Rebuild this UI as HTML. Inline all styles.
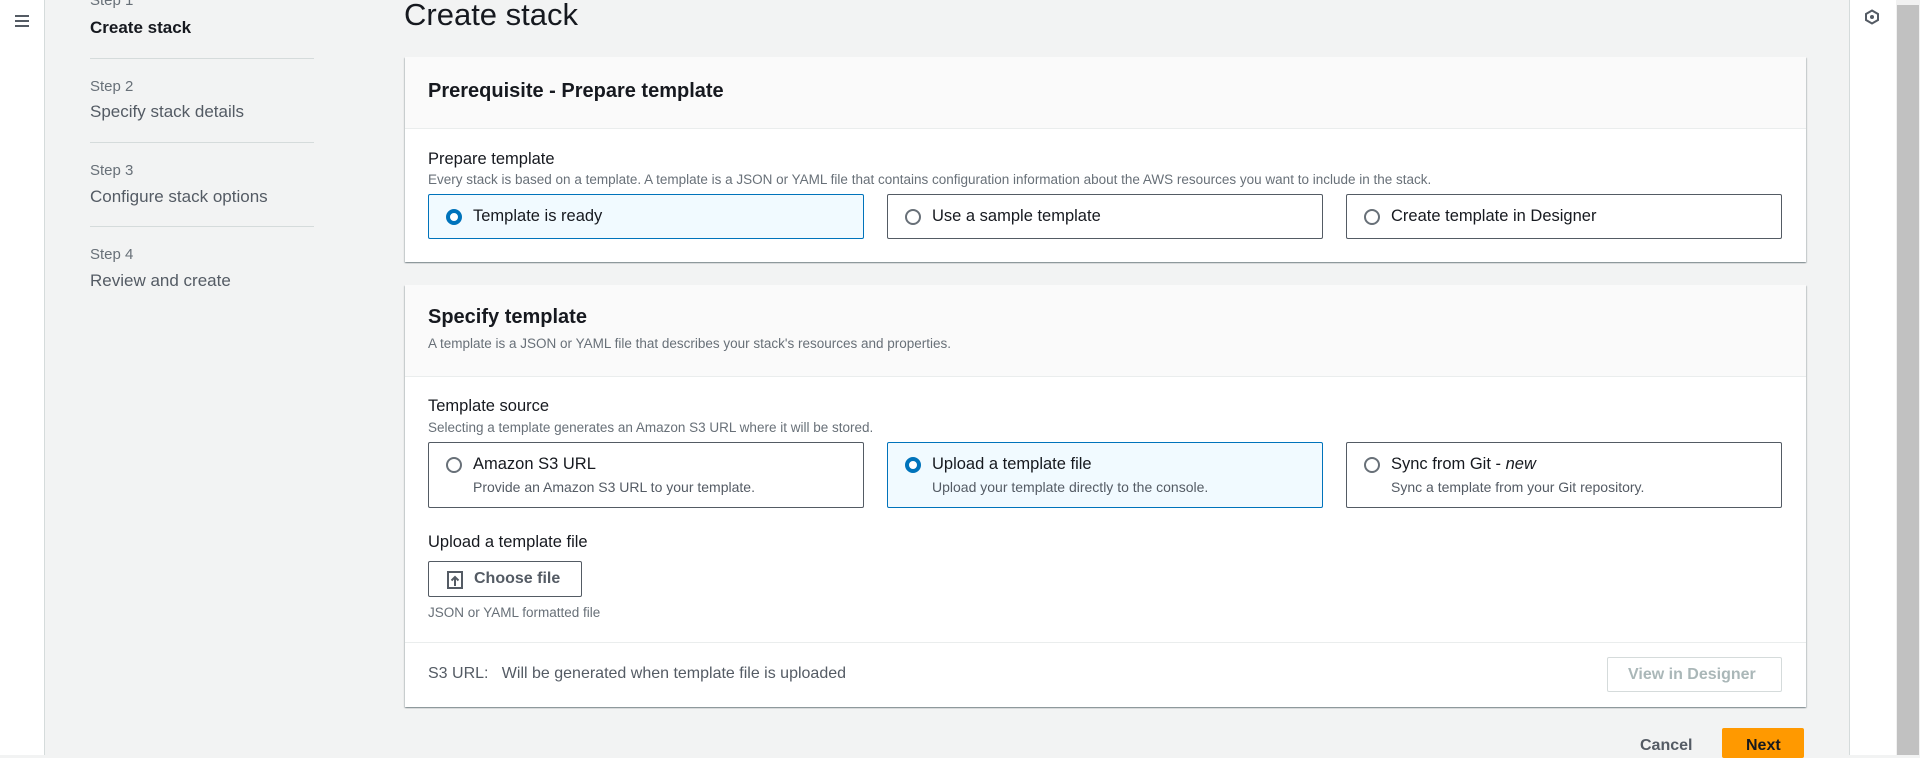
<!DOCTYPE html>
<html><head><style>
*{box-sizing:border-box;margin:0;padding:0}
body{width:1920px;height:755px;overflow:hidden;background:#f2f3f3;font-family:"Liberation Sans",sans-serif;color:#16191f;position:relative}
.a{position:absolute;white-space:nowrap}
.nav{left:0;top:0;width:45px;height:755px;background:#fff;border-right:1px solid #d5dbdb}
.step{font-size:15px;color:#687078}
.sl{font-size:17px;color:#545b64}
.hr{height:1px;background:#d5dbdb;width:224px;left:90px}
.panel{background:#fff;box-shadow:0 1px 1px 0 rgba(0,28,36,.3),1px 1px 1px 0 rgba(0,28,36,.15),-1px 1px 1px 0 rgba(0,28,36,.15);left:405px;width:1401px}
.ph{background:#fafafa;border-bottom:1px solid #eaeded;left:0;top:0;width:1401px}
.lbl{font-size:16.5px;color:#16191f}
.desc{font-size:13.5px;color:#687078}
.tile{border:1px solid #545b64;border-radius:2px;width:436px;background:#fff}
.tile.sel{border-color:#0073bb;background:#f1faff}
.rad{position:absolute;left:17px;width:16px;height:16px;border-radius:50%;border:2px solid #687078;background:#fff}
.sel .rad{border:4.5px solid #0073bb}
.tt{position:absolute;left:44px;font-size:16.5px;color:#16191f}
.td{position:absolute;left:44px;font-size:14px;color:#545b64}
</style></head><body>
<div class="a nav"></div>
<svg class="a" style="left:14px;top:14px" width="16" height="14"><path d="M1 2h14M1 7h14M1 12h14" stroke="#545b64" stroke-width="2"/></svg>
<div class="a step" style="left:90px;top:-8px">Step 1</div>
<div class="a" style="left:90px;top:18px;font-size:17px;font-weight:bold">Create stack</div>
<div class="a hr" style="top:58px"></div>
<div class="a step" style="left:90px;top:78px">Step 2</div>
<div class="a sl" style="left:90px;top:102px">Specify stack details</div>
<div class="a hr" style="top:142px"></div>
<div class="a step" style="left:90px;top:162px">Step 3</div>
<div class="a sl" style="left:90px;top:187px">Configure stack options</div>
<div class="a hr" style="top:226px"></div>
<div class="a step" style="left:90px;top:246px">Step 4</div>
<div class="a sl" style="left:90px;top:271px">Review and create</div>

<div class="a" style="left:404px;top:-3px;font-size:31px;color:#16191f">Create stack</div>

<div class="a panel" style="top:57px;height:205px">
 <div class="a ph" style="height:72px"><div class="a" style="left:23px;top:23px;font-size:20px;font-weight:bold">Prerequisite - Prepare template</div></div>
 <div class="a lbl" style="left:23px;top:93px">Prepare template</div>
 <div class="a desc" style="left:23px;top:115px">Every stack is based on a template. A template is a JSON or YAML file that contains configuration information about the AWS resources you want to include in the stack.</div>
 <div class="a tile sel" style="left:23px;top:137px;height:45px"><div class="rad" style="top:14px"></div><div class="tt" style="top:12px">Template is ready</div></div>
 <div class="a tile" style="left:482px;top:137px;height:45px"><div class="rad" style="top:14px"></div><div class="tt" style="top:12px">Use a sample template</div></div>
 <div class="a tile" style="left:941px;top:137px;height:45px"><div class="rad" style="top:14px"></div><div class="tt" style="top:12px">Create template in Designer</div></div>
</div>

<div class="a panel" style="top:285px;height:422px">
 <div class="a ph" style="height:92px">
  <div class="a" style="left:23px;top:21px;font-size:20px;font-weight:bold">Specify template</div>
  <div class="a desc" style="left:23px;top:51px">A template is a JSON or YAML file that describes your stack's resources and properties.</div>
 </div>
 <div class="a lbl" style="left:23px;top:112px">Template source</div>
 <div class="a desc" style="left:23px;top:135px">Selecting a template generates an Amazon S3 URL where it will be stored.</div>
 <div class="a tile" style="left:23px;top:157px;height:66px"><div class="rad" style="top:14px"></div><div class="tt" style="top:12px">Amazon S3 URL</div><div class="td" style="top:36px">Provide an Amazon S3 URL to your template.</div></div>
 <div class="a tile sel" style="left:482px;top:157px;height:66px"><div class="rad" style="top:14px"></div><div class="tt" style="top:12px">Upload a template file</div><div class="td" style="top:36px">Upload your template directly to the console.</div></div>
 <div class="a tile" style="left:941px;top:157px;height:66px"><div class="rad" style="top:14px"></div><div class="tt" style="top:12px">Sync from Git - <i>new</i></div><div class="td" style="top:36px">Sync a template from your Git repository.</div></div>
 <div class="a lbl" style="left:23px;top:248px">Upload a template file</div>
 <div class="a" style="left:23px;top:276px;width:154px;height:36px;border:1px solid #545b64;border-radius:2px;background:#fff">
  <svg class="a" style="left:18px;top:9px" width="16" height="18"><path d="M1 1h14v16H1zM8 15V6M4.5 9.5L8 6l3.5 3.5" fill="none" stroke="#545b64" stroke-width="2"/></svg>
  <div class="a" style="left:45px;top:8px;font-size:16px;font-weight:bold;color:#545b64">Choose file</div>
 </div>
 <div class="a desc" style="left:23px;top:320px">JSON or YAML formatted file</div>
 <div class="a" style="left:0;top:357px;width:1401px;height:1px;background:#eaeded"></div>
 <div class="a" style="left:23px;top:380px;font-size:16px;color:#545b64">S3 URL:&nbsp;&nbsp; Will be generated when template file is uploaded</div>
 <div class="a" style="left:1202px;top:372px;width:175px;height:35px;border:1px solid #d5dbdb;border-radius:2px;background:#fff"><div class="a" style="left:20px;top:8px;font-size:16px;font-weight:bold;color:#aab7b8">View in Designer</div></div>
</div>

<div class="a" style="left:1640px;top:737px;font-size:16px;font-weight:bold;color:#545b64">Cancel</div>
<div class="a" style="left:1722px;top:728px;width:82px;height:30px;background:#ff9900;border-radius:2px"><div class="a" style="left:24px;top:9px;font-size:16px;font-weight:bold;color:#16191f">Next</div></div>

<div class="a" style="left:1849px;top:0;width:47px;height:755px;background:#fff;border-left:1px solid #d5dbdb"></div>
<svg class="a" style="left:1864px;top:9px" width="16" height="16"><path d="M8 1.5L14 5v6l-6 3.5L2 11V5z" fill="none" stroke="#545b64" stroke-width="2"/><circle cx="8" cy="8" r="2" fill="#545b64"/></svg>
<div class="a" style="left:1896px;top:0;width:24px;height:755px;background:#f1f1f1"></div>
<div class="a" style="left:1897px;top:5px;width:22px;height:750px;background:#c1c1c1"></div>
</body></html>
